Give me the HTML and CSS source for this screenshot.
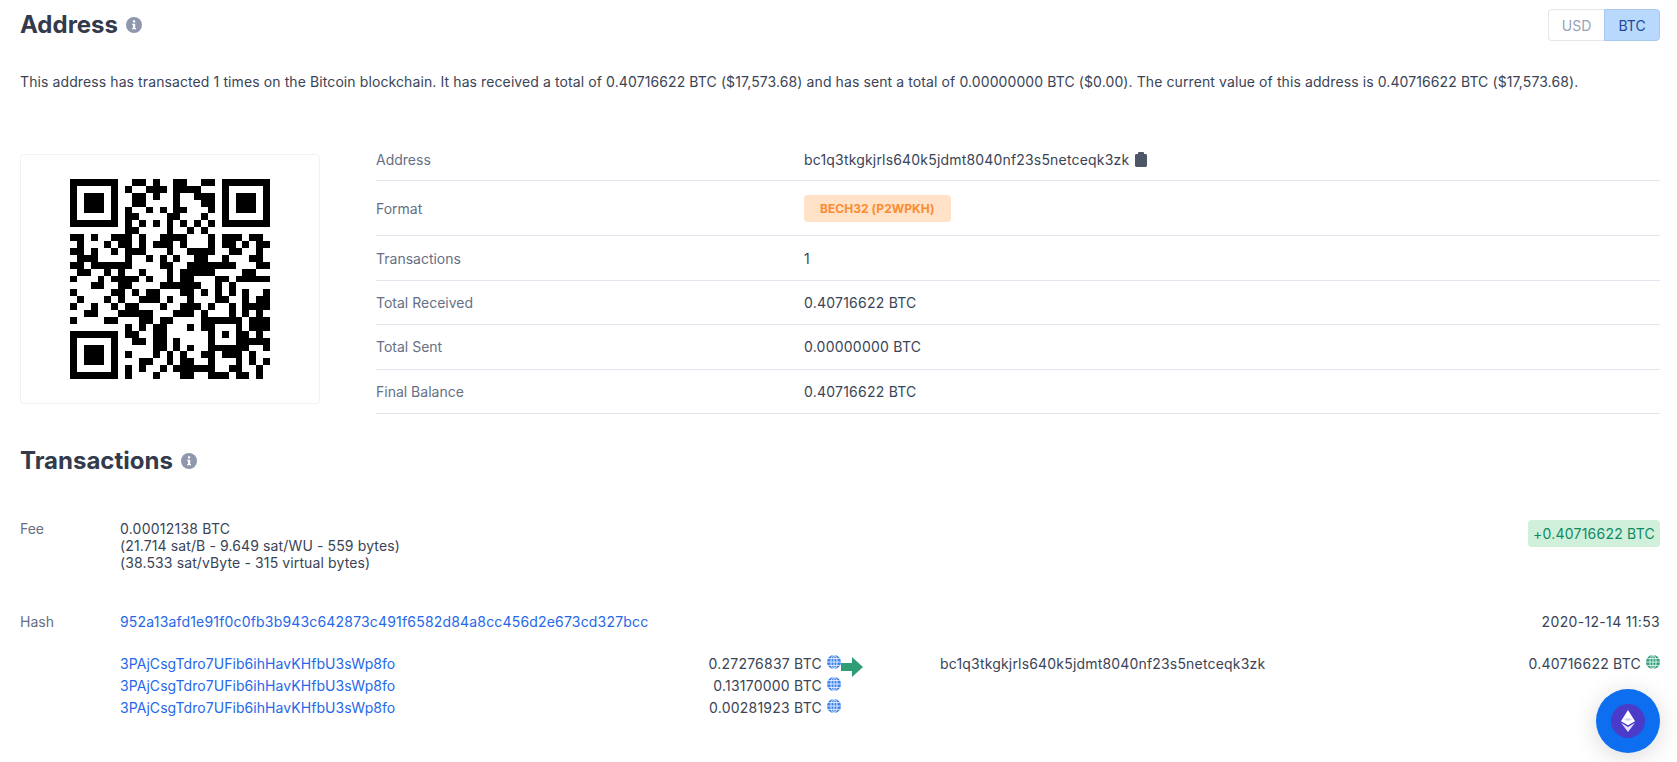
FILE: index.html
```html
<!DOCTYPE html>
<html lang="en">
<head>
<meta charset="utf-8">
<title>Address</title>
<link rel="stylesheet" href="styles.css">
</head>
<body>
<svg class="defs" width="0" height="0" aria-hidden="true">
  <symbol id="info" viewBox="0 0 16 16">
    <circle cx="8" cy="8" r="8" fill="currentColor"/>
    <rect x="6.9" y="3.2" width="2.3" height="2.2" rx=".6" fill="#fff"/>
    <path d="M6.2 6.8h3v4.3h.8v1.2H6.1v-1.2h.9V8H6.2z" fill="#fff"/>
  </symbol>
  <symbol id="globe" viewBox="0 0 14 14">
    <circle cx="7" cy="7" r="7" fill="currentColor"/>
    <g fill="none" stroke="#fff" stroke-width=".8">
      <ellipse cx="7" cy="7" rx="3.1" ry="7"/>
      <path d="M7 0v14M0 7h14M1.2 3.6h11.6M1.2 10.4h11.6"/>
    </g>
  </symbol>
</svg>

<main class="page">
  <header class="head">
    <h1 class="title">Address <svg class="info"><use href="#info"/></svg></h1>
    <div class="toggle">
      <span class="toggle-item">USD</span>
      <span class="toggle-item toggle-on">BTC</span>
    </div>
  </header>

  <p class="summary">This address has transacted 1 times on the Bitcoin blockchain. It has received a total of 0.40716622 BTC ($17,573.68) and has sent a total of 0.00000000 BTC ($0.00). The current value of this address is 0.40716622 BTC ($17,573.68).</p>

  <section class="overview">
    <div class="qr-card">
      <svg class="qr" viewBox="0 0 29 29" shape-rendering="crispEdges">
        <path stroke="#000" stroke-width="1" fill="none" d="
M0 .5h7M9 .5h2M12 .5h1M15 .5h2M19 .5h2M22 .5h7
M0 1.5h1M6 1.5h1M8 1.5h1M11 1.5h3M15 1.5h4M22 1.5h1M28 1.5h1
M0 2.5h1M2 2.5h3M6 2.5h1M9 2.5h2M12 2.5h1M15 2.5h1M18 2.5h3M22 2.5h1M24 2.5h3M28 2.5h1
M0 3.5h1M2 3.5h3M6 3.5h1M9 3.5h2M15 3.5h1M19 3.5h2M22 3.5h1M24 3.5h3M28 3.5h1
M0 4.5h1M2 4.5h3M6 4.5h1M8 4.5h1M11 4.5h1M13 4.5h1M15 4.5h2M20 4.5h1M22 4.5h1M24 4.5h3M28 4.5h1
M0 5.5h1M6 5.5h1M8 5.5h2M14 5.5h2M19 5.5h1M22 5.5h1M28 5.5h1
M0 6.5h7M8 6.5h1M10 6.5h1M12 6.5h1M14 6.5h1M16 6.5h1M18 6.5h1M20 6.5h1M22 6.5h7
M8 7.5h2M14 7.5h1M17 7.5h1M19 7.5h1
M0 8.5h2M3 8.5h1M6 8.5h3M10 8.5h1M13 8.5h4M20 8.5h1M22 8.5h3M26 8.5h2
M1 9.5h1M5 9.5h1M7 9.5h2M10 9.5h1M12 9.5h3M16 9.5h1M20 9.5h1M22 9.5h2M25 9.5h1M27 9.5h2
M0 10.5h2M3 10.5h1M6 10.5h1M8 10.5h3M14 10.5h1M17 10.5h4M23 10.5h2M27 10.5h1
M1 11.5h3M8 11.5h1M11 11.5h1M13 11.5h1M15 11.5h1M18 11.5h2M22 11.5h1M26 11.5h2
M0 12.5h2M3 12.5h6M13 12.5h2M17 12.5h7M27 12.5h2
M1 13.5h2M5 13.5h1M7 13.5h1M10 13.5h1M14 13.5h1M16 13.5h5M25 13.5h2
M0 14.5h1M4 14.5h1M6 14.5h4M11 14.5h1M14 14.5h1M16 14.5h2M21 14.5h2M24 14.5h5
M3 15.5h2M7 15.5h2M13 15.5h6M21 15.5h1M23 15.5h1
M0 16.5h1M6 16.5h2M9 16.5h1M11 16.5h2M16 16.5h2M19 16.5h1M21 16.5h1M23 16.5h1M25 16.5h1M28 16.5h1
M1 17.5h1M5 17.5h1M7 17.5h1M10 17.5h3M14 17.5h1M17 17.5h1M21 17.5h2M25 17.5h1M27 17.5h2
M0 18.5h1M3 18.5h1M6 18.5h1M8 18.5h2M13 18.5h1M16 18.5h3M20 18.5h1M23 18.5h1M25 18.5h4
M2 19.5h2M7 19.5h5M15 19.5h3M19 19.5h1M23 19.5h1M25 19.5h1M27 19.5h1
M0 20.5h1M5 20.5h2M10 20.5h2M13 20.5h2M19 20.5h6M26 20.5h3
M8 21.5h1M10 21.5h1M12 21.5h2M17 21.5h1M19 21.5h2M24 21.5h1M26 21.5h3
M0 22.5h7M8 22.5h2M12 22.5h2M20 22.5h1M22 22.5h1M24 22.5h2M27 22.5h1
M0 23.5h1M6 23.5h1M9 23.5h2M12 23.5h2M15 23.5h1M20 23.5h1M24 23.5h5
M0 24.5h1M2 24.5h3M6 24.5h1M12 24.5h2M15 24.5h1M17 24.5h1M20 24.5h6M28 24.5h1
M0 25.5h1M2 25.5h3M6 25.5h1M8 25.5h1M12 25.5h1M14 25.5h1M16 25.5h1M19 25.5h2M22 25.5h3M26 25.5h1
M0 26.5h1M2 26.5h3M6 26.5h1M10 26.5h2M14 26.5h1M16 26.5h2M20 26.5h1M24 26.5h1M26 26.5h1M28 26.5h1
M0 27.5h1M6 27.5h1M8 27.5h1M10 27.5h1M13 27.5h1M15 27.5h6M23 27.5h2M27 27.5h1
M0 28.5h7M8 28.5h1M12 28.5h1M16 28.5h2M20 28.5h3M24 28.5h2M27 28.5h1"/>
      </svg>
    </div>
    <div class="facts">
      <div class="fact fact-first">
        <span class="fact-label">Address</span>
        <span class="fact-value"><span class="hashy">bc1q3tkgkjrls640k5jdmt8040nf23s5netceqk3zk</span>
          <svg class="clip" viewBox="0 0 12 15"><path d="M4 0h4a1 1 0 0 1 1 1v1h1.6A1.4 1.4 0 0 1 12 3.4v10.2a1.4 1.4 0 0 1-1.4 1.4H1.4A1.4 1.4 0 0 1 0 13.6V3.4A1.4 1.4 0 0 1 1.4 2H3V1a1 1 0 0 1 1-1z" fill="#4e5668"/></svg>
        </span>
      </div>
      <div class="fact fact-format">
        <span class="fact-label">Format</span>
        <span class="fact-value"><span class="pill">BECH32 (P2WPKH)</span></span>
      </div>
      <div class="fact">
        <span class="fact-label">Transactions</span>
        <span class="fact-value">1</span>
      </div>
      <div class="fact">
        <span class="fact-label">Total Received</span>
        <span class="fact-value num">0.40716622 BTC</span>
      </div>
      <div class="fact">
        <span class="fact-label">Total Sent</span>
        <span class="fact-value num">0.00000000 BTC</span>
      </div>
      <div class="fact">
        <span class="fact-label">Final Balance</span>
        <span class="fact-value num">0.40716622 BTC</span>
      </div>
    </div>
  </section>

  <h2 class="title title-tx">Transactions <svg class="info"><use href="#info"/></svg></h2>

  <section class="tx">
    <div class="tx-row tx-fee">
      <span class="tx-label">Fee</span>
      <div class="tx-main fee-text"><span class="num">0.00012138 BTC</span><br>(21.714 sat/B - 9.649 sat/WU - 559 bytes)<br>(38.533 sat/vByte - 315 virtual bytes)</div>
      <span class="delta num">+0.40716622 BTC</span>
    </div>
    <div class="tx-row tx-hash">
      <span class="tx-label">Hash</span>
      <a class="link tx-main hashy" href="#">952a13afd1e91f0c0fb3b943c642873c491f6582d84a8cc456d2e673cd327bcc</a>
      <span class="date">2020-12-14 11:53</span>
    </div>
    <div class="flow">
      <div class="inputs">
        <div class="io"><a class="link addr" href="#">3PAjCsgTdro7UFib6ihHavKHfbU3sWp8fo</a><span class="amt"><span class="num">0.27276837 BTC</span> <svg class="globe"><use href="#globe"/></svg></span></div>
        <div class="io"><a class="link addr" href="#">3PAjCsgTdro7UFib6ihHavKHfbU3sWp8fo</a><span class="amt"><span class="num">0.13170000 BTC</span> <svg class="globe"><use href="#globe"/></svg></span></div>
        <div class="io"><a class="link addr" href="#">3PAjCsgTdro7UFib6ihHavKHfbU3sWp8fo</a><span class="amt"><span class="num">0.00281923 BTC</span> <svg class="globe"><use href="#globe"/></svg></span></div>
      </div>
      <svg class="arrow" viewBox="0 0 22 20"><path d="M0 6h11V0l11 10-11 10v-6H0z" fill="#2f9e76"/></svg>
      <div class="outputs">
        <div class="io"><span class="hashy">bc1q3tkgkjrls640k5jdmt8040nf23s5netceqk3zk</span><span class="amt"><span class="num">0.40716622 BTC</span> <svg class="globe globe-green"><use href="#globe"/></svg></span></div>
      </div>
    </div>
  </section>
</main>

<button class="fab" aria-label="Ethereum">
  <span class="fab-inner">
    <svg class="eth" viewBox="0 0 14 22">
      <path d="M7 0l7 11.2L7 15.3 0 11.2z" fill="#fff"/>
      <path d="M7 11l-4.2-1.4L7 7.7l4.2 1.9z" fill="#c9c4f5" opacity=".8"/>
      <path d="M0 12.8l7 4.1 7-4.1L7 22z" fill="#e4e1fb"/>
    </svg>
  </span>
</button>
</body>
</html>
```

FILE: styles.css
```css
* { box-sizing: border-box; }
html, body { margin: 0; padding: 0; background: #fff; }
body {
  font-family: Inter, "Liberation Sans", sans-serif;
  font-size: 14px;
  line-height: 17px;
  color: #3a4456;
  overflow: hidden;
}
.defs { position: absolute; }
.page { padding: 9px 17px 0 20px; }
.head { display: flex; justify-content: space-between; align-items: flex-start; }
.title {
  display: flex;
  align-items: center;
  gap: 8px;
  margin: 0;
  font-size: 24px;
  line-height: 32px;
  font-weight: 700;
  color: #323a4c;
}
.info { width: 16px; height: 16px; color: #8e97ab; }
.toggle { display: flex; height: 32px; }
.toggle-item {
  display: flex;
  align-items: center;
  justify-content: center;
  width: 56px;
  border: 1px solid #e4e6ec;
  color: #98a2b8;
}
.toggle-item:first-child { border-right: 0; border-radius: 4px 0 0 4px; }
.toggle-on {
  background: #b8d9fb;
  border-color: #a9c8ee;
  color: #23479a;
  border-radius: 0 4px 4px 0;
}
.summary { margin: 32px 0 0; letter-spacing: .1px; }
.num { letter-spacing: .23px; }
.hashy { letter-spacing: .18px; }
.addr { letter-spacing: .06px; }
.date { letter-spacing: .33px; }
.fee-text { letter-spacing: .12px; }
.overview { display: flex; margin-top: 49px; }
.qr-card {
  flex: none;
  display: flex;
  align-items: center;
  justify-content: center;
  width: 300px;
  height: 250px;
  margin-top: 15px;
  border: 1px solid #f1f1f8;
  border-radius: 4px;
}
.qr { width: 200px; height: 200px; display: block; }
.facts { flex: 1; margin-left: 56px; }
.fact {
  display: flex;
  align-items: center;
  height: 44.4px;
  border-bottom: 1px solid #e3e4ee;
}
.fact-first { height: 42.4px; padding-bottom: 1px; }
.fact-format { height: 55px; }
.fact-label { width: 428px; flex: none; color: #667085; }
.fact-value { display: flex; align-items: center; gap: 6px; }
.clip { width: 12px; height: 15px; }
.pill {
  display: block;
  padding: 5px 16px;
  border-radius: 4px;
  background: #ffe2c7;
  color: #fb8c32;
  font-size: 12px;
  font-weight: 700;
  letter-spacing: .05px;
}
.title-tx { margin-top: 30.6px; }
.tx { margin-top: 43px; }
.tx-row { display: flex; align-items: flex-start; justify-content: space-between; }
.tx-label { width: 100px; flex: none; color: #667085; }
.tx-main { flex: 1; }
.tx-fee { height: 93px; }
.link { color: #2668e8; text-decoration: none; }
.delta {
  padding: 5px;
  border-radius: 4px;
  background: #d0f0dc;
  color: #0e8a62;
}
.flow { display: flex; align-items: flex-start; margin-top: 25px; }
.inputs { width: 721px; margin-left: 100px; flex: none; }
.io { display: flex; justify-content: space-between; align-items: flex-start; height: 22px; }
.amt { display: flex; gap: 5px; align-items: flex-start; }
.globe { width: 14px; height: 14px; color: #3d82ee; }
.globe-green { color: #2f9e76; }
.arrow { flex: none; width: 22px; height: 20px; margin-top: 2px; }
.outputs { flex: 1; margin-left: 77px; }
.fab {
  position: fixed;
  left: 1596px;
  top: 689px;
  width: 64px;
  height: 64px;
  padding: 0;
  border: 0;
  border-radius: 50%;
  background: #0d6ef0;
  box-shadow: 0 4px 24px rgba(0, 0, 0, .15);
  display: flex;
  align-items: center;
  justify-content: center;
}
.fab-inner {
  display: flex;
  align-items: center;
  justify-content: center;
  width: 34px;
  height: 34px;
  border-radius: 50%;
  background: #4a3bc9;
}
.eth { width: 14px; height: 22px; }
```
